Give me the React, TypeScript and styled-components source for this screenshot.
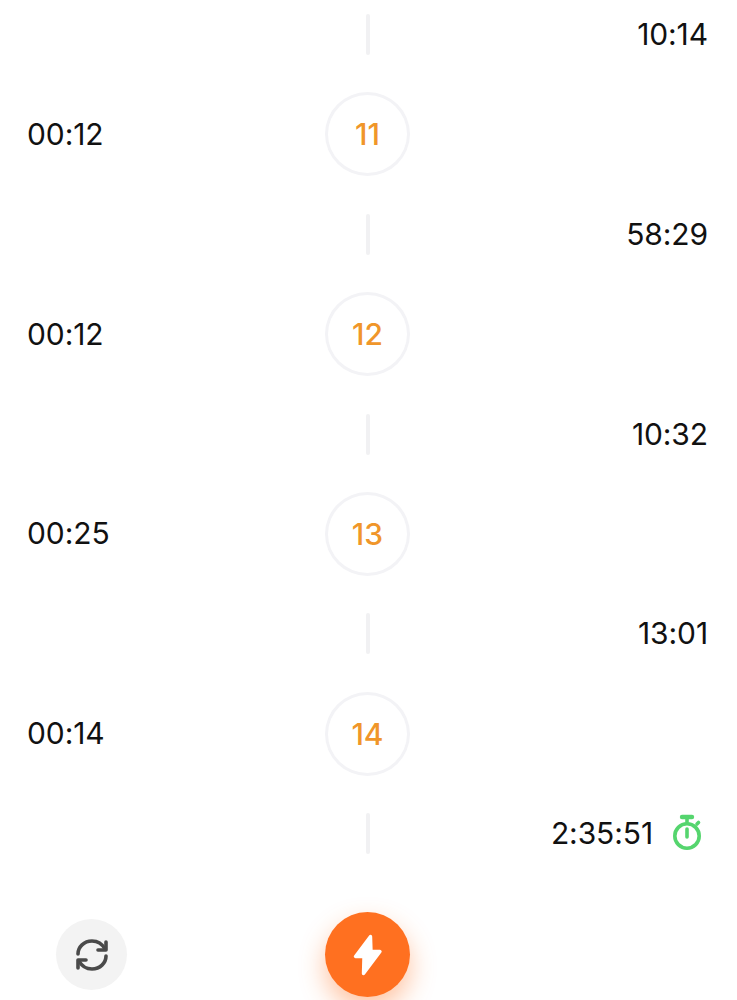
import React from "react";
import styled, { createGlobalStyle } from "styled-components";

const GlobalStyle = createGlobalStyle`
  html, body {
    margin: 0;
    padding: 0;
    background: #fff;
    height: 1000px;
    overflow: hidden;
  }
`;

const Page = styled.div`
  width: 737px;
  height: 1000px;
  display: flex;
  flex-direction: column;
  font-family: Inter, "Liberation Sans", sans-serif;
  color: #111;
`;

const Timeline = styled.div`
  display: grid;
  grid-template-columns: 298px 85px 1fr;
  row-gap: 37.4px;
  align-items: center;
  justify-items: center;
  padding: 14px 29px 0 27px;
`;

const Connector = styled.div`
  width: 4px;
  height: 41px;
  border-radius: 2px;
  background: #f1f1f3;
`;

const Lap = styled.div`
  box-sizing: border-box;
  width: 85px;
  height: 84px;
  border: 3px solid #f3f3f6;
  border-radius: 50%;
  display: flex;
  align-items: center;
  justify-content: center;
  font-size: 30px;
  font-weight: 500;
  color: #f0962a;
`;

const Time = styled.div<{ $side: "left" | "right" }>`
  justify-self: ${(p) => (p.$side === "left" ? "start" : "end")};
  display: flex;
  align-items: center;
  font-size: 30px;
  line-height: 36px;
  letter-spacing: -0.1px;
  padding-bottom: 1px;
`;

const TimerSlot = styled.span`
  display: flex;
  margin-left: 18px;
  margin-right: 5px;
`;

const BottomBar = styled.div`
  display: grid;
  grid-template-columns: 298px 85px 1fr;
  align-items: center;
  margin-top: 58px;
  padding: 0 29px 0 27px;
`;

const RefreshButton = styled.button`
  width: 71px;
  height: 71px;
  margin-left: 29px;
  padding: 0;
  border: none;
  border-radius: 50%;
  background: #f3f3f3;
  display: flex;
  align-items: center;
  justify-content: center;
`;

const BoltButton = styled.button`
  width: 85px;
  height: 85px;
  padding: 0;
  border: none;
  border-radius: 50%;
  background: #ff7020;
  box-shadow: 0 12px 26px rgba(255, 112, 32, 0.42);
  display: flex;
  align-items: center;
  justify-content: center;
`;

const RefreshIcon = () => (
  <svg width="36" height="36" viewBox="0 0 36 36" fill="none" stroke="#4a4a4a" strokeWidth="3.6" strokeLinecap="round" strokeLinejoin="round">
    <path d="M4 17C4 10 10 4 18 4c5.500 0 10 2.500 13 8" />
    <path d="M32 19c0 7-6 13-14 13-5.500 0-10-2.500-13-8" />
    <path d="M32 5v8h-8" />
    <path d="M4 31v-8h8" />
  </svg>
);

const BoltIcon = () => (
  <svg width="30" height="42" viewBox="0 0 30 42" fill="#fff" stroke="#fff" strokeWidth="3.4" strokeLinejoin="round">
    <path d="M17.500 2.500L2.500 22.500h8.500l-.5 17L27 17.500h-9z" />
  </svg>
);

const TimerIcon = () => (
  <svg width="32" height="38" viewBox="0 0 32 38" fill="none" stroke="#55d56e" strokeWidth="3.6" strokeLinecap="round">
    <circle cx="16" cy="22" r="12.200" />
    <path d="M16 15v8" />
    <path d="M11 3h10" strokeWidth="4.400" />
    <path d="M16 3v5" />
    <path d="M26 10l1.500-1.500" />
  </svg>
);

const rows = [
  { lap: 11, split: "00:12", total: "10:14" },
  { lap: 12, split: "00:12", total: "58:29" },
  { lap: 13, split: "00:25", total: "10:32" },
  { lap: 14, split: "00:14", total: "13:01" },
];

export default function App() {
  return (
    <Page>
      <GlobalStyle />
      <Timeline>
        {rows.map((r) => (
          <React.Fragment key={r.lap}>
            <span />
            <Connector />
            <Time $side="right">{r.total}</Time>
            <Time $side="left">{r.split}</Time>
            <Lap>{r.lap}</Lap>
            <span />
          </React.Fragment>
        ))}
        <span />
        <Connector />
        <Time $side="right">
          2:35:51
          <TimerSlot>
            <TimerIcon />
          </TimerSlot>
        </Time>
      </Timeline>
      <BottomBar>
        <RefreshButton>
          <RefreshIcon />
        </RefreshButton>
        <BoltButton>
          <BoltIcon />
        </BoltButton>
      </BottomBar>
    </Page>
  );
}
